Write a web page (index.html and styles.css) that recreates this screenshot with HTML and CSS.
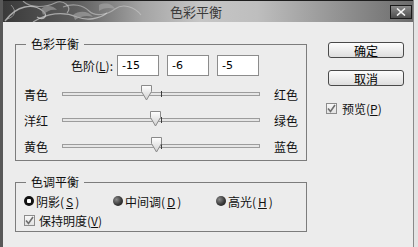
FILE: index.html
```html
<!DOCTYPE html>
<html lang="zh-CN">
<head>
    <meta charset="UTF-8">
    <title>色彩平衡</title>
    <link rel="stylesheet" href="styles.css">
</head>
<body>
    <div class="window">
        <div class="titlebar">
            <svg class="ornament" width="150" height="21" viewBox="0 0 150 21">
                <path d="M2 20 C14 4 30 2 40 10 C46 15 40 20 34 16" fill="none" stroke="#d8d8d8" stroke-width="1.4" opacity="0.7"/>
                <path d="M20 0 C28 8 44 6 52 2 C60 -2 70 6 64 12" fill="none" stroke="#cfcfcf" stroke-width="1.2" opacity="0.6"/>
                <path d="M30 21 C44 12 60 10 74 16 C84 20 96 18 104 12" fill="none" stroke="#e0e0e0" stroke-width="1.3" opacity="0.6"/>
                <path d="M60 6 C70 2 80 4 86 10 C92 16 104 14 112 8 C120 2 132 6 138 14" fill="none" stroke="#d0d0d0" stroke-width="1.1" opacity="0.55"/>
                <path d="M8 4 C14 10 12 16 4 18" fill="none" stroke="#bbbbbb" stroke-width="1" opacity="0.6"/>
                <path d="M38 8 C42 4 50 4 54 9 C48 8 44 10 40 14 Z" fill="#9a9a9a" opacity="0.7"/>
                <path d="M70 14 C76 9 86 10 90 16 C84 14 78 15 72 19 Z" fill="#a8a8a8" opacity="0.6"/>
                <path d="M96 4 C102 1 110 3 112 8 C106 6 100 7 96 10 Z" fill="#b0b0b0" opacity="0.5"/>
            </svg>
            <span class="title">色彩平衡</span>
            <button class="close">
                <svg width="10" height="8" viewBox="0 0 10 8">
                    <path d="M1 0.5 L9 7.5 M9 0.5 L1 7.5" stroke="#f4f4f4" stroke-width="1.6"/>
                </svg>
            </button>
        </div>

        <div class="content">
            <div class="main">
                <fieldset class="group balance">
                    <legend>色彩平衡</legend>
                    <div class="levels">
                        <label class="levels-label">色阶(<u>L</u>):</label>
                        <input class="num" type="text" value="-15">
                        <input class="num" type="text" value="-6">
                        <input class="num" type="text" value="-5">
                    </div>

                    <div class="slider-row">
                        <span class="lbl">青色</span>
                        <div class="track">
                            <span class="tick"></span>
                            <span class="thumb" style="left: 42.5%">
                                <svg width="11" height="16" viewBox="0 0 11 16"><path d="M0.5 0.5 H10.5 V6.5 L5.5 15 L0.5 6.5 Z" fill="url(#tg)" stroke="#8a8a8a"/><defs><linearGradient id="tg" x1="0" y1="0" x2="0" y2="1"><stop offset="0" stop-color="#ffffff"/><stop offset="1" stop-color="#cfcfcf"/></linearGradient></defs></svg>
                            </span>
                        </div>
                        <span class="lbl right">红色</span>
                    </div>

                    <div class="slider-row">
                        <span class="lbl">洋红</span>
                        <div class="track">
                            <span class="tick"></span>
                            <span class="thumb" style="left: 47%">
                                <svg width="11" height="16" viewBox="0 0 11 16"><path d="M0.5 0.5 H10.5 V6.5 L5.5 15 L0.5 6.5 Z" fill="url(#tg)" stroke="#8a8a8a"/></svg>
                            </span>
                        </div>
                        <span class="lbl right">绿色</span>
                    </div>

                    <div class="slider-row">
                        <span class="lbl">黄色</span>
                        <div class="track">
                            <span class="tick"></span>
                            <span class="thumb" style="left: 47.5%">
                                <svg width="11" height="16" viewBox="0 0 11 16"><path d="M0.5 0.5 H10.5 V6.5 L5.5 15 L0.5 6.5 Z" fill="url(#tg)" stroke="#8a8a8a"/></svg>
                            </span>
                        </div>
                        <span class="lbl right">蓝色</span>
                    </div>
                </fieldset>

                <fieldset class="group tone">
                    <legend>色调平衡</legend>
                    <div class="radio-row">
                        <span class="radio-item first"><span class="radio checked"></span>阴影(<u>S</u>)</span>
                        <span class="radio-item second"><span class="radio"></span>中间调(<u>D</u>)</span>
                        <span class="radio-item"><span class="radio"></span>高光(<u>H</u>)</span>
                    </div>
                    <div class="check-row">
                        <span class="checkbox"><svg width="9" height="9" viewBox="0 0 9 9"><path d="M1 4.5 L3.5 7.5 L8 1" fill="none" stroke="#6e6e6e" stroke-width="1.6"/></svg></span>
                        保持明度(<u>V</u>)
                    </div>
                </fieldset>
            </div>

            <div class="side">
                <button class="btn">确定</button>
                <button class="btn second">取消</button>
                <div class="check-row preview">
                    <span class="checkbox"><svg width="9" height="9" viewBox="0 0 9 9"><path d="M1 4.5 L3.5 7.5 L8 1" fill="none" stroke="#6e6e6e" stroke-width="1.6"/></svg></span>
                    预览(<u>P</u>)
                </div>
            </div>
        </div>
    </div>
</body>
</html>
```

FILE: styles.css
```css
* {
    box-sizing: border-box;
    margin: 0;
    padding: 0;
}

body {
    background-color: #e4e4e4;
    font-family: "Noto Sans CJK SC", "DejaVu Sans", sans-serif;
    font-size: 12px;
    color: #111;
}

.window {
    width: 414px;
    height: 247px;
    display: flex;
    flex-direction: column;
    background-color: #ececec;
    border-left: 3px solid #585858;
    border-right: 1px solid #8a8a8a;
}

/* title bar */
.titlebar {
    height: 22px;
    flex: none;
    display: flex;
    align-items: center;
    border-top: 1px solid #1e1e1e;
    background: linear-gradient(90deg, #3a3a3a 0%, #5e5e5e 18%, #a4a4a4 34%, #c6c6c6 48%, #bebebe 62%, #8e8e8e 84%, #6c6c6c 100%);
}

.ornament {
    flex: none;
    display: block;
}

.title {
    margin-left: 17px;
    font-size: 13px;
    color: #3a3a3a;
    line-height: 20px;
}

.close {
    margin-left: auto;
    margin-right: 1px;
    width: 22px;
    height: 14px;
    border: 1px solid #1a1a1a;
    background: linear-gradient(#8c8c8c, #4c4c4c);
    display: flex;
    align-items: center;
    justify-content: center;
}

/* body */
.content {
    display: flex;
    padding: 15px 0 0 12px;
}

.main {
    width: 292px;
    flex: none;
}

.group {
    border: 1px solid #7c7c7c;
    padding: 0 0 1px 0;
}

.group legend {
    margin-left: 10px;
    padding: 0 5px;
    font-size: 12px;
    line-height: 14px;
}

.levels {
    display: flex;
    align-items: center;
    margin: 4px 0 0 8px;
    height: 21px;
}

.levels-label {
    width: 89px;
    margin-right: 4px;
    text-align: right;
}

.num {
    width: 42px;
    height: 21px;
    margin-right: 8px;
    border: 1px solid #8c8c8c;
    background: #fff;
    padding-left: 4px;
    font-family: "DejaVu Sans", sans-serif;
    font-size: 11px;
    color: #000;
}

.slider-row {
    display: grid;
    grid-template-columns: 38px 198px auto;
    align-items: center;
    height: 26px;
    margin-left: 8px;
}

.slider-row:first-of-type {
    margin-top: 5px;
}

.levels + .slider-row {
    margin-top: 5px;
}

.lbl.right {
    margin-left: 14px;
}

.track {
    position: relative;
    height: 4px;
    border: 1px solid #9c9c9c;
    background-color: #e6e6e6;
}

.tick {
    position: absolute;
    left: 98px;
    top: -2px;
    width: 1px;
    height: 6px;
    background-color: #3c3c3c;
}

.thumb {
    position: absolute;
    top: -8px;
    width: 11px;
    height: 16px;
    margin-left: -5px;
}

.thumb svg {
    display: block;
}

/* tone group */
.tone {
    margin-top: 14px;
    padding-bottom: 3px;
}

.radio-row {
    display: flex;
    align-items: center;
    height: 16px;
    margin: 4px 0 0 8px;
}

.radio-item {
    display: flex;
    align-items: center;
    gap: 2px;
}

.radio-item.first {
    width: 89px;
}

.radio-item.second {
    width: 103px;
}

.radio {
    width: 10px;
    height: 10px;
    border-radius: 50%;
    background: radial-gradient(circle at 35% 35%, #8a8a8a 0%, #3a3a3a 55%, #111 100%);
}

.radio.checked {
    background: radial-gradient(circle, #fff 0 2px, #111 2.5px);
}

.check-row {
    display: flex;
    align-items: center;
    height: 16px;
    margin: 3px 0 0 8px;
}

.checkbox {
    width: 11px;
    height: 11px;
    margin-right: 4px;
    border: 1px solid #8c8c8c;
    background: linear-gradient(#f8f8f8, #e2e2e2);
    display: flex;
    align-items: center;
    justify-content: center;
}

/* buttons */
.side {
    margin-left: 21px;
    width: 76px;
    display: flex;
    flex-direction: column;
}

.btn {
    width: 76px;
    height: 16px;
    margin-top: 5px;
    border: 1px solid #4a4a4a;
    border-radius: 3px;
    background: linear-gradient(#fdfdfd, #dedede);
    font-family: "Noto Sans CJK SC", sans-serif;
    font-size: 12px;
    line-height: 13px;
    color: #000;
}

.btn.second {
    margin-top: 12px;
}

.preview {
    margin: 14px 0 0 -2px;
}

.preview .checkbox {
    margin-right: 5px;
}
```
